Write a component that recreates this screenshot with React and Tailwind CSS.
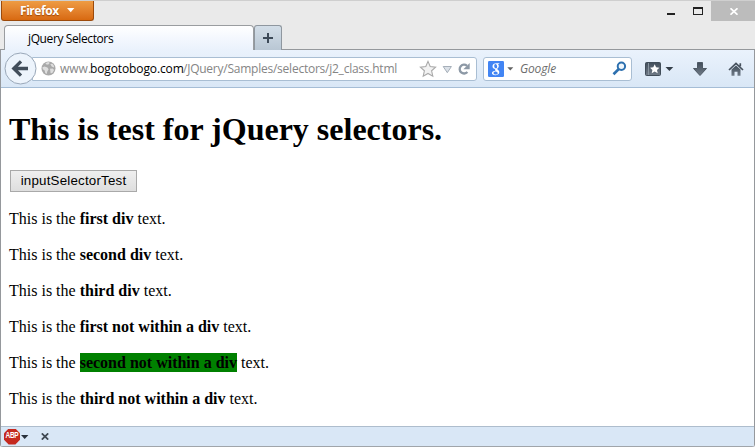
import React from "react";

function TitleBar() {
  return (
    <div className="flex h-[25px] items-start border-t border-[#cfcfcf]">
      <button className="ml-px flex h-5 w-[93px] items-center rounded-b-[3px] border border-t-0 border-[#9c4a0b] bg-gradient-to-b from-[#ee9c43] to-[#d8690f] pl-[18px] font-['Open_Sans',sans-serif] text-[12px] leading-none font-bold tracking-[-0.45px] text-white [text-shadow:0_1px_1px_#9b4808]">
        <span className="w-[47px] text-left">Firefox</span>
        <svg width="8" height="5" viewBox="0 0 8 5"><path d="M0 0h7.4L3.7 4.2z" fill="#fff" /></svg>
      </button>
      <div className="ml-auto flex h-5">
        <svg width="44" height="20" viewBox="0 0 44 20" shapeRendering="crispEdges">
          <path d="M0 12h8v2H0z" fill="#222" />
          <path fillRule="evenodd" d="M26 6h10v8H26zM27 8v5h8V8z" fill="#222" />
        </svg>
        <div className="flex h-5 w-[44px] items-center bg-[#bcbcbc]">
          <svg className="ml-[19px]" width="8" height="7" viewBox="0 0 8 7"><path d="M.5.3 7.5 6.7M7.5.3.5 6.7" stroke="#fff" strokeWidth="1.7" /></svg>
        </div>
      </div>
    </div>
  );
}

function TabStrip() {
  return (
    <div className="flex h-[25px] border-b border-[#95989c]">
      <div className="ml-1 -mb-px h-[25px] w-[250px] rounded-t-[4px] border border-b-0 border-[#9a9da0] bg-gradient-to-b from-white via-[#f4f8fe] to-[#eaf2fc] pl-[23px] font-['Open_Sans',sans-serif] text-[12px] leading-[26px] tracking-[-0.39px] whitespace-nowrap text-black">
        jQuery Selectors
      </div>
      <div className="flex h-[25px] w-7 items-center justify-center rounded-t-[3px] border border-b-0 border-[#8f979f] bg-gradient-to-b from-[#d3dee8] to-[#b9c7d4]">
        <svg width="10" height="10" viewBox="0 0 10 10"><path d="M5 0v10M0 5h10" stroke="#3d4a58" strokeWidth="2" /></svg>
      </div>
    </div>
  );
}

function Globe() {
  return (
    <svg width="15" height="15" viewBox="0 0 15 15">
      <circle cx="7.5" cy="7.5" r="7" fill="#a9a9a9" />
      <path d="M4.4 2.2 7.2 1l1.5.7-.9 1.6-2 .5zM1.4 6.2l2.2-.7 2.8 1 1.2 1.8-1.2 2-.8 2.7-1.4-.9-.5-2.7-1.9-1.2zM9.3 3.1l2.2-.4 1.7 2.6-.5 1.1-2-.8zM9 7.7l2.7-.3 1.4 1.7-1.8 2.8-1.7.3z" fill="#dedede" />
    </svg>
  );
}

function AddressBar() {
  return (
    <div className="-ml-[5px] flex h-[24px] w-[445px] shrink-0 items-center rounded-r-[3px] border border-[#a9bed3] bg-white pl-[8px]">
      <Globe />
      <div className="ml-[4px] flex w-[359px] shrink-0 font-['Open_Sans',sans-serif] text-[12px] leading-4 whitespace-nowrap text-[#858585]">
        <span className="w-[30px] shrink-0 tracking-[0px]">www.</span>
        <span className="w-[93px] shrink-0 tracking-[-0.12px] text-black">bogotobogo.com</span>
        <span className="tracking-[-0.24px]">/JQuery/Samples/selectors/j2_class.html</span>
      </div>
      <svg className="shrink-0" width="54" height="18" viewBox="0 0 54 18">
        <path d="m9 1.4 2.2 5.1 5.4.6-4 3.7 1.2 5.4L9 13.4l-4.8 2.8 1.2-5.4-4-3.7 5.4-.6z" fill="#f2f2f2" stroke="#a9a9a9" strokeWidth="1.1" />
        <path d="M24.2 6.5h8.2l-4.1 6.2z" fill="#dbe1e8" stroke="#a6afb9" />
        <path d="M48.4 12A4.4 4.4 0 1 1 48 5.8" fill="none" stroke="#8d99a6" strokeWidth="2.3" />
        <path d="M50.7 3v6.3h-6.3z" fill="#8d99a6" />
      </svg>
    </div>
  );
}

function SearchBar() {
  return (
    <div className="ml-[6px] flex h-[24px] w-[149px] shrink-0 items-center rounded-[3px] border border-[#a9bed3] bg-white pl-1">
      <svg width="16" height="16" viewBox="0 0 16 16">
        <rect width="16" height="16" rx="1.2" fill="#4285f4" />
        <path d="M11.6 2.2H8.3C6 2.2 4.5 3.5 4.5 5.2S5.7 8 7.4 8c-.7.9-.3 1.3.3 1.8-2.5.1-3.8 1-3.8 2.3 0 1.4 1.3 2.1 3.4 2.1 2.5 0 4-1.2 4-2.9 0-1.3-.8-1.9-1.7-2.7-.7-.6-.4-.9.2-1.4.7-.6 1-1.2 1-2.1 0-.8-.3-1.5-.8-2h.9zM7.5 2.9c1.8 0 2.5 4.4.5 4.4S5.5 2.9 7.5 2.9zm.6 7.6c1 .7 1.6 1 1.6 1.7 0 .8-.7 1.3-2 1.3-1.4 0-2.2-.6-2.2-1.5s.9-1.5 2.6-1.5z" fill="#fff" />
      </svg>
      <svg className="ml-[3px]" width="7" height="4" viewBox="0 0 7 4"><path d="M.3.2h6L3.3 3.6z" fill="#636363" /></svg>
      <span className="ml-[6px] w-[92px] font-['Open_Sans',sans-serif] text-[12px] leading-4 tracking-[-0.15px] text-[#6d6d6d] italic">Google</span>
      <svg className="shrink-0" width="15" height="15" viewBox="0 0 15 15">
        <circle cx="9.4" cy="5.3" r="3.7" fill="#eff6fc" stroke="#2d70af" strokeWidth="2" />
        <path d="m6.8 8-5.3 5.2" stroke="#2d70af" strokeWidth="2.6" />
      </svg>
    </div>
  );
}

function Toolbar() {
  return (
    <div className="flex h-[38px] items-center border-b border-[#a5bdd6] bg-gradient-to-b from-[#eaf2fc] to-[#d9e7f6]">
      <svg className="relative ml-[3px] shrink-0" width="33" height="33" viewBox="0 0 33 33">
        <circle cx="16.5" cy="16.5" r="15.5" fill="#edf4fc" stroke="#99a7b8" />
        <path d="M24 16.5H11M17 9.4l-7.2 7.1 7.2 7.1" fill="none" stroke="#424e5b" strokeWidth="3.3" />
      </svg>
      <AddressBar />
      <SearchBar />
      <svg className="ml-[13px] shrink-0" width="102" height="18" viewBox="0 0 102 18">
        <defs>
          <linearGradient id="slate" x1="0" y1="0" x2="0" y2="1"><stop stopColor="#424e5b" /><stop offset="1" stopColor="#707b87" /></linearGradient>
        </defs>
        <rect x=".5" y="2.5" width="15" height="13" rx="1" fill="url(#slate)" stroke="#414d59" />
        <path d="M3.5 3v12" stroke="#8995a0" />
        <path d="m9.7 4.3 1.4 3 3.3.4-2.4 2.3.7 3.3-3-1.7-3 1.7.7-3.3L5 7.7l3.3-.4z" fill="#fff" />
        <path d="M20.5 7h7.8l-3.9 4z" fill="#343e49" />
        <path d="M52.5 2.5h5v6h4L55 15.5l-6.5-7h4z" fill="url(#slate)" stroke="#4e5965" strokeLinejoin="round" />
        <path d="M86.5 9.5 91 5.4l4.5 4.1v6.3h-3v-4h-3v4h-3z" fill="url(#slate)" />
        <path d="m84 10 7-6.6 7 6.6M95.3 3.3v3" fill="none" stroke="#46515d" strokeWidth="1.7" />
      </svg>
    </div>
  );
}

function Line({ children, marked = false }) {
  return (
    <p className="mb-[18px] h-[18px] text-[16px] leading-[18px] whitespace-nowrap">
      This is the <b className={marked ? "bg-[#008000] py-px" : ""}>{children}</b> text.
    </p>
  );
}

function Page() {
  return (
    <main className="h-[338px] overflow-hidden bg-white pt-[22px] pl-[8px] font-['Liberation_Serif',serif] text-black">
      <h1 className="h-[38px] text-[32px] leading-[38px] font-bold whitespace-nowrap">This is test for jQuery selectors.</h1>
      <button className="mt-[22px] mb-[18px] ml-px block h-[22px] w-[127px] border border-[#a9a9a9] bg-gradient-to-b from-[#efefef] to-[#dedede] font-['Liberation_Sans',sans-serif] text-[13.33px] leading-[20px] tracking-[0.2px] whitespace-nowrap">
        inputSelectorTest
      </button>
      <Line>first div</Line>
      <Line>second div</Line>
      <Line>third div</Line>
      <Line>first not within a div</Line>
      <Line marked>second not within a div</Line>
      <Line>third not within a div</Line>
    </main>
  );
}

function StatusBar() {
  return (
    <footer className="flex h-[21px] items-center border-t border-b border-t-[#aebdcd] border-b-[#a0a5aa] bg-[#d9e7f6] pl-[3px]">
      <div className="flex h-[16px] w-[16px] items-center justify-center bg-[#c5291f] [clip-path:polygon(29%_0,71%_0,100%_29%,100%_71%,71%_100%,29%_100%,0_71%,0_29%)]">
        <span className="scale-y-[1.25] font-['Liberation_Sans',sans-serif] text-[6.5px] leading-none font-bold tracking-[-0.3px] text-white">ABP</span>
      </div>
      <svg className="ml-px" width="8" height="4" viewBox="0 0 8 4"><path d="M0 0h7.4L3.7 4z" fill="#29313b" /></svg>
      <svg className="ml-[12px]" width="8" height="7" viewBox="0 0 8 7"><path d="M.8.4 7.2 6.6M7.2.4.8 6.6" stroke="#414a54" strokeWidth="1.8" /></svg>
    </footer>
  );
}

export default function App() {
  return (
    <div className="h-[447px] w-[755px] overflow-hidden bg-[#eaeaea]">
      <TitleBar />
      <TabStrip />
      <div className="overflow-hidden rounded-b-[3px] border-x border-[#95989c]">
        <Toolbar />
        <Page />
        <StatusBar />
      </div>
    </div>
  );
}
